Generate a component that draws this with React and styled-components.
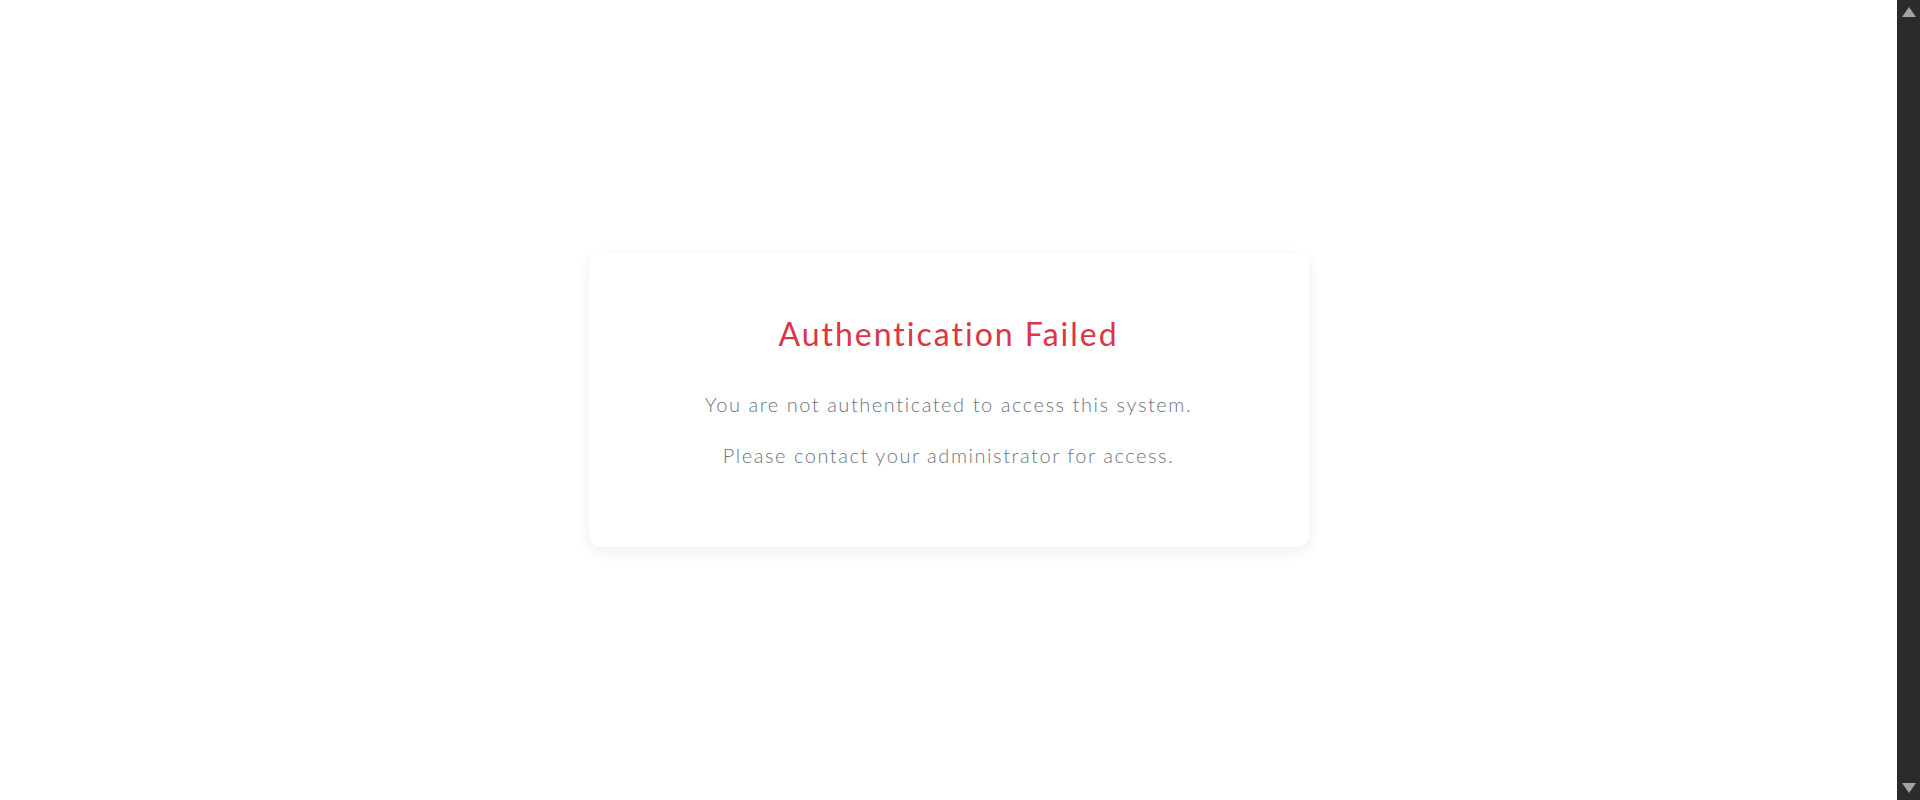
import React from "react";
import styled, { createGlobalStyle } from "styled-components";

const GlobalStyle = createGlobalStyle`
  html,
  body {
    margin: 0;
    background: #ffffff;
  }

  body {
    font-family: Lato, "Open Sans", sans-serif;
    font-variant-ligatures: none;
  }
`;

const Page = styled.main`
  min-height: 100vh;
  box-sizing: border-box;
  padding-right: 23px;
  display: flex;
  align-items: center;
  justify-content: center;
  background: #ffffff;
`;

const Card = styled.section`
  width: 720px;
  box-sizing: border-box;
  padding: 62px 48px 77px;
  background: #ffffff;
  border-radius: 12px;
  box-shadow: 0 4px 14px rgba(0, 0, 0, 0.08);
  text-align: center;
`;

const Title = styled.h2`
  margin: 0 0 36px;
  font-size: 32px;
  font-weight: 400;
  line-height: 1.2;
  letter-spacing: 2px;
  color: #dc3545;
`;

const Lead = styled.p`
  margin: 0 0 21px;
  font-family: "Lato Light", Lato, sans-serif;
  font-size: 20px;
  font-weight: 300;
  line-height: 1.5;
  letter-spacing: 1.55px;
  color: #6c757d;

  &:last-child {
    margin-bottom: 0;
  }
`;

/* the dark browser scrollbar seen at the right edge of the window */
const ScrollTrack = styled.div`
  position: fixed;
  top: 0;
  right: 0;
  width: 23px;
  height: 100vh;
  background: #2b2b2b;
  display: flex;
  flex-direction: column;
  justify-content: space-between;
  align-items: center;
  padding: 7px 0;
  box-sizing: border-box;
`;

const Arrow = styled.span`
  width: 0;
  height: 0;
  border-left: 7px solid transparent;
  border-right: 7px solid transparent;
  ${(p) =>
    p.$down
      ? "border-top: 10px solid #a3a3a3;"
      : "border-bottom: 10px solid #a3a3a3;"}
`;

const App = () => {
  return (
    <>
      <GlobalStyle />
      <Page>
        <Card>
          <Title>Authentication Failed</Title>
          <Lead>You are not authenticated to access this system.</Lead>
          <Lead>Please contact your administrator for access.</Lead>
        </Card>
      </Page>
      <ScrollTrack aria-hidden="true">
        <Arrow />
        <Arrow $down />
      </ScrollTrack>
    </>
  );
};

export default App;
